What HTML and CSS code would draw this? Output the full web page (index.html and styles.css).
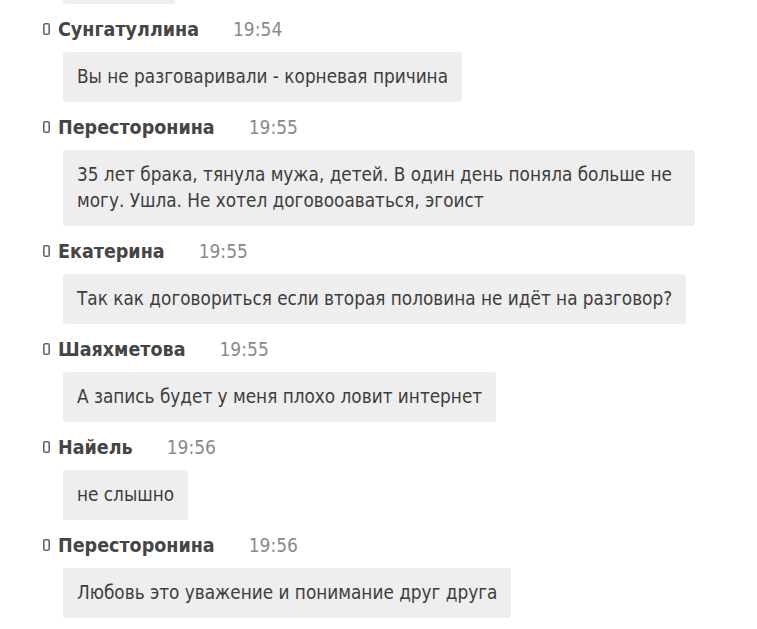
FILE: index.html
```html
<!DOCTYPE html>
<html lang="ru">
<head>
<meta charset="utf-8">
<link rel="stylesheet" href="styles.css">
</head>
<body>
<div class="chat">
  <div class="bubble cut"></div>

  <div class="head"><svg class="dev" viewBox="0 0 7 12"><rect x="0.8" y="0.8" width="5.4" height="10.4" rx="1.3"/></svg><span class="name">Сунгатуллина</span><span class="time">19:54</span></div>
  <div class="bubble">Вы не разговаривали - корневая причина</div>

  <div class="head"><svg class="dev" viewBox="0 0 7 12"><rect x="0.8" y="0.8" width="5.4" height="10.4" rx="1.3"/></svg><span class="name">Пересторонина</span><span class="time">19:55</span></div>
  <div class="bubble">35 лет брака, тянула мужа, детей. В один день поняла больше не могу. Ушла. Не хотел договооаваться, эгоист</div>

  <div class="head"><svg class="dev" viewBox="0 0 7 12"><rect x="0.8" y="0.8" width="5.4" height="10.4" rx="1.3"/></svg><span class="name">Екатерина</span><span class="time">19:55</span></div>
  <div class="bubble">Так как договориться если вторая половина не идёт на разговор?</div>

  <div class="head"><svg class="dev" viewBox="0 0 7 12"><rect x="0.8" y="0.8" width="5.4" height="10.4" rx="1.3"/></svg><span class="name">Шаяхметова</span><span class="time">19:55</span></div>
  <div class="bubble">А запись будет у меня плохо ловит интернет</div>

  <div class="head"><svg class="dev" viewBox="0 0 7 12"><rect x="0.8" y="0.8" width="5.4" height="10.4" rx="1.3"/></svg><span class="name">Найель</span><span class="time">19:56</span></div>
  <div class="bubble">не слышно</div>

  <div class="head"><svg class="dev" viewBox="0 0 7 12"><rect x="0.8" y="0.8" width="5.4" height="10.4" rx="1.3"/></svg><span class="name">Пересторонина</span><span class="time">19:56</span></div>
  <div class="bubble">Любовь это уважение и понимание друг друга</div>
</div>
</body>
</html>
```

FILE: styles.css
```css
html, body {
  margin: 0;
  padding: 0;
  background: #ffffff;
}
body {
  font-family: "DejaVu Sans Condensed", "DejaVu Sans", sans-serif;
  font-size: 18.8px;
  color: #3d3d3d;
  overflow: hidden;
}
.chat {
  padding-left: 43px;
}
.head {
  display: flex;
  align-items: center;
  height: 22px;
  margin-top: 14px;
  margin-bottom: 12px;
}
.dev {
  width: 7px;
  height: 12px;
  margin-right: 8px;
  fill: none;
  stroke: #666;
  stroke-width: 1.6;
}
.name {
  font-weight: bold;
  color: #454545;
  font-size: 19.5px;
}
.time {
  margin-left: 34px;
  color: #8a8a8a;
  font-size: 19px;
}
.bubble {
  margin-left: 20px;
  background: #eeeeee;
  border-radius: 3px;
  padding: 12px 14px;
  line-height: 26px;
  width: fit-content;
  max-width: 604px;
}
.cut {
  margin-top: -46px;
  width: 84px;
  height: 26px;
}
```
